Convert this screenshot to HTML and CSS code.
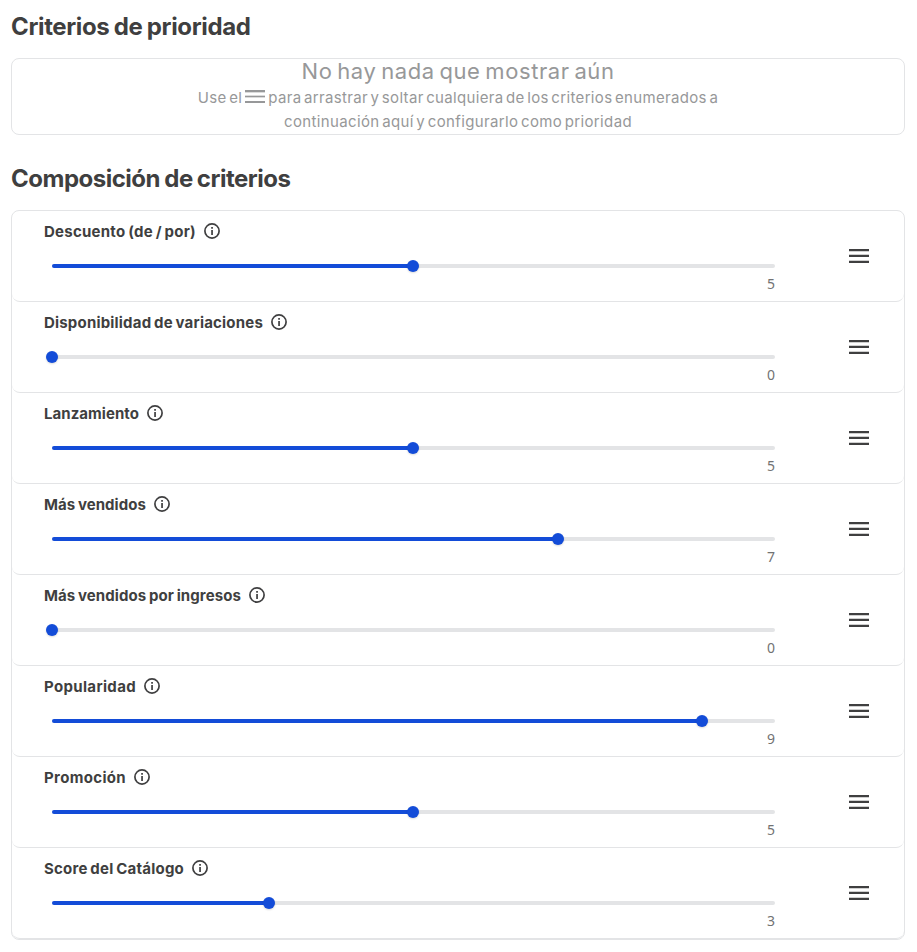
FILE: index.html
```html
<!DOCTYPE html>
<html lang="es">
<head>
<meta charset="utf-8">
<title>Criterios</title>
<link rel="stylesheet" href="styles.css">
</head>
<body>
<svg class="defs" width="0" height="0">
  <symbol id="info" viewBox="0 0 16 16"><circle cx="8" cy="8" r="7.1" fill="none" stroke="currentColor" stroke-width="1.7"/><path d="M7.2 4h1.7v1.7H7.2zM7.2 7h1.7v5H7.2z" fill="currentColor"/></symbol>
  <symbol id="drag" viewBox="0 0 20 15"><path d="M0 0h20v2H0zM0 6h20v2H0zM0 12h20v2H0z" fill="currentColor"/><path d="M0 2h20v1H0zM0 5h20v1H0zM0 11h20v1H0z" fill="currentColor" opacity=".25"/></symbol>
  <symbol id="drag-small" viewBox="0 0 20 13"><path d="M0 0h20v2H0zM0 6h20v1H0zM0 11h20v2H0z" fill="currentColor"/><path d="M0 2h20v1H0zM0 5h20v1H0zM0 7h20v1H0z" fill="currentColor" opacity=".35"/></symbol>
</svg>
<main class="page">
  <h2 class="heading heading-priority">Criterios de prioridad</h2>
  <section class="empty">
    <p class="empty-title">No hay nada que mostrar aún</p>
    <p class="empty-line">Use el <svg class="empty-drag"><use href="#drag-small"/></svg> para arrastrar y soltar cualquiera de los criterios enumerados a</p>
    <p class="empty-line second">continuación aquí y configurarlo como prioridad</p>
  </section>
  <h2 class="heading heading-composition">Composición de criterios</h2>
  <ul class="criteria" id="criteria"></ul>
</main>
<script src="main.js"></script>
</body>
</html>
```
FILE: styles.css
```css
* { box-sizing: border-box; }
body { margin: 0; background: #fff; color: #3f3f40; font-family: Inter, "Liberation Sans", sans-serif; }
.defs { display: block; height: 0; }
.page { padding: 11px 12px 0 11px; }
.heading { margin: 0; width: max-content; font-size: 24px; line-height: 32px; font-weight: 700; word-spacing: -1px; }
.heading-composition { margin-top: 28px; }
.empty { height: 77px; margin-top: 15px; border: 1px solid #e3e4e6; border-radius: 8px; color: #979899; text-align: center; }
.empty p { margin: 0 auto; width: max-content; }
.empty .empty-title { margin-bottom: 2px; font-size: 22px; line-height: 25px; word-spacing: -2px; }
.empty-line { font-size: 15px; line-height: 24px; white-space: nowrap; display: flex; align-items: center; gap: 3px; word-spacing: -2px; }
.empty-drag { width: 20px; height: 13px; margin-top: -3px; }
.criteria { list-style: none; margin: 15px 0 0; padding: 0; border: 1px solid #e3e4e6; border-radius: 8px; }
.criterion { height: 91px; display: flex; border-bottom: 1px solid #e3e4e6; border-radius: 8px; padding: 11px 35px 0 32px; justify-content: space-between; }
.content { width: 731px; }
.label-row { display: flex; align-items: center; gap: 8px; height: 20px; }
.label { font-size: 15px; line-height: 20px; font-weight: 700; white-space: nowrap; word-spacing: -1px; }
.info { width: 16px; height: 16px; margin-top: -2px; }
.track { height: 4px; margin: 22px 0 0 8px; border-radius: 2px; background: #e3e4e6; }
.fill { height: 4px; border-radius: 2px; background: #134cd8; position: relative; }
.thumb { position: absolute; right: -5.7px; top: -4px; width: 12px; height: 12px; border-radius: 50%; background: #134cd8; box-shadow: 0 1px 2px rgba(0,0,0,.15); }
.value { margin-top: 6px; text-align: right; font-family: "Noto Sans", sans-serif; font-size: 14px; line-height: 20px; color: #727273; }
.drag { width: 20px; height: 15px; margin-top: 27px; }
```
FILE: main.js
```js
const criteria = [
  ["Descuento (de / por)", 5, 152],
  ["Disponibilidad de variaciones", 0, 219],
  ["Lanzamiento", 5, 95],
  ["Más vendidos", 7, 102],
  ["Más vendidos por ingresos", 0, 197],
  ["Popularidad", 9, 92],
  ["Promoción", 5, 82],
  ["Score del Catálogo", 3, 140]
];
document.getElementById("criteria").innerHTML = criteria.map(([name, value]) => `
  <li class="criterion">
    <div class="content">
      <div class="label-row"><span class="label">${name}</span><svg class="info"><use href="#info"/></svg></div>
      <div class="track"><div class="fill" style="width:${value * 10}%"><span class="thumb"></span></div></div>
      <div class="value">${value}</div>
    </div>
    <svg class="drag"><use href="#drag"/></svg>
  </li>`).join("");

// Tune tracking so that each text occupies its designed width.
function fit(el, width) {
  el.style.letterSpacing = "0px";
  const range = document.createRange();
  range.selectNodeContents(el);
  const natural = range.getBoundingClientRect().width;
  el.style.letterSpacing = (width - natural) / el.textContent.length + "px";
}
document.querySelectorAll(".label").forEach((el, i) => fit(el, criteria[i][2]));
fit(document.querySelector(".heading-priority"), 239.5);
fit(document.querySelector(".heading-composition"), 279.5);
fit(document.querySelector(".empty-title"), 313);
fit(document.querySelector(".empty-line"), 521);
fit(document.querySelector(".second"), 348);
```
